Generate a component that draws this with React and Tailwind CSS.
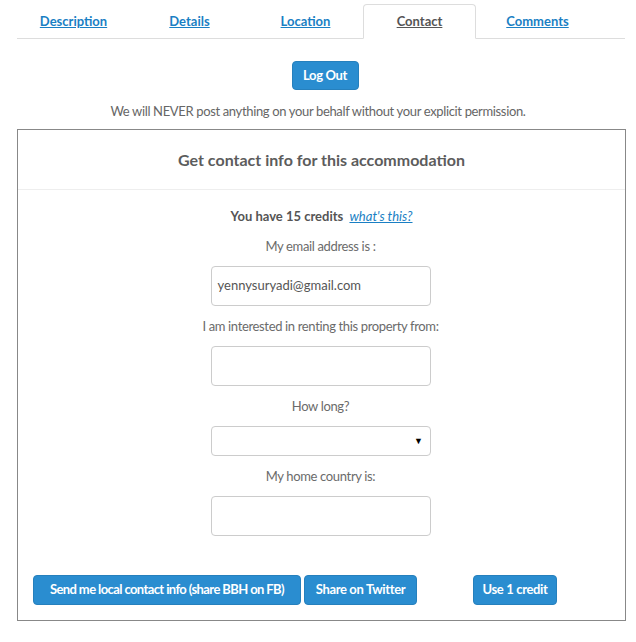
import React from "react";

const tabs = ["Description", "Details", "Location", "Contact", "Comments"];

const Field = ({ label, children }) => (
  <div className="flex flex-col items-center">
    <label className="text-[13px] text-[#6b6b6b] leading-[20px]">{label}</label>
    {children}
  </div>
);

export default function App() {
  return (
    <div className="w-[636px] h-[642px] bg-white font-['Lato','Liberation_Sans',sans-serif] text-[13px] tracking-[-0.35px] text-[#666]">
      {/* Tabs */}
      <div className="pt-[4px] pl-[17px] pr-[11px]">
        <ul className="flex border-b border-[#ddd] h-[35px]">
          {tabs.map((t) => (
            <li
              key={t}
              className={`w-[113px] mr-[3px] -mb-px flex items-center justify-center rounded-t-[4px] border ${
                t === "Contact" ? "border-[#ddd] border-b-white bg-white -ml-[2px] mr-[5px]" : "border-transparent"
              }`}
            >
              <a
                href="#"
                className={`text-[13px] font-bold underline tracking-normal ${
                  t === "Contact" ? "text-[#555]" : "text-[#1a7fc4]"
                }`}
              >
                {t}
              </a>
            </li>
          ))}
        </ul>
      </div>

      {/* Log out */}
      <div className="flex justify-center mt-[22px] pl-[14px]">
        <button className="h-[29px] w-[67px] rounded-[4px] bg-[#2a8dd0] border border-[#2680bd] text-white text-[13px] font-bold">
          Log Out
        </button>
      </div>
      <p className="text-center mt-[12px] leading-[18px]">
        We will NEVER post anything on your behalf without your explicit permission.
      </p>

      {/* Panel */}
      <div className="mx-[17px] mt-[9px] w-[609px] h-[492px] border border-[#888] flex flex-col">
        <div className="h-[60px] flex items-center justify-center border-b border-[#eee]">
          <h3 className="text-[16px] font-bold text-[#5c5c5c] tracking-normal">
            Get contact info for this accommodation
          </h3>
        </div>
        <div className="flex flex-col items-center pt-[16px]">
          <p className="font-bold text-[#555] leading-[20px] tracking-normal">
            You have 15 credits{" "}
            <a href="#" className="ml-[3px] italic font-normal underline text-[#1a7fc4]">
              what's this?
            </a>
          </p>
          <div className="mt-[10px] flex flex-col items-center gap-[10px] pr-[2px]">
            <Field label="My email address is :">
              <div className="mt-[10px] w-[220px] h-[40px] border border-[#ccc] rounded-[4px] flex items-center px-[6px] text-[#555] tracking-normal">
                yennysuryadi@gmail.com
              </div>
            </Field>
            <Field label="I am interested in renting this property from:">
              <div className="mt-[10px] w-[220px] h-[40px] border border-[#ccc] rounded-[4px]" />
            </Field>
            <Field label="How long?">
              <div className="mt-[10px] w-[220px] h-[30px] border border-[#ccc] rounded-[4px] flex items-center justify-end pr-[7px]">
                <span className="text-[9px] text-black">▼</span>
              </div>
            </Field>
            <Field label="My home country is:">
              <div className="mt-[10px] w-[220px] h-[40px] border border-[#ccc] rounded-[4px]" />
            </Field>
          </div>
        </div>
        <div className="mt-auto mb-[15px] flex pl-[15px]">
          <button className="h-[30px] rounded-[4px] bg-[#2a8dd0] border border-[#2680bd] text-white text-[13px] font-bold w-[268px] whitespace-nowrap tracking-[-0.6px]">
            Send me local contact info (share BBH on FB)
          </button>
          <button className="ml-[3px] h-[30px] w-[113px] rounded-[4px] bg-[#2a8dd0] border border-[#2680bd] text-white text-[13px] font-bold whitespace-nowrap">
            Share on Twitter
          </button>
          <button className="ml-[56px] h-[30px] w-[84px] rounded-[4px] bg-[#2a8dd0] border border-[#2680bd] text-white text-[13px] font-bold whitespace-nowrap">
            Use 1 credit
          </button>
        </div>
      </div>
    </div>
  );
}
